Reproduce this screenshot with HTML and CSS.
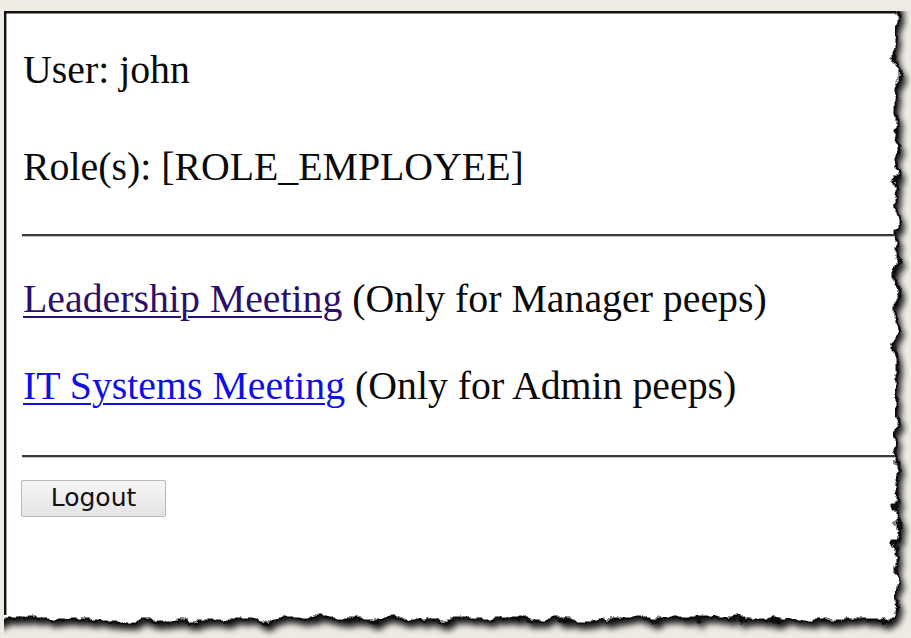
FILE: index.html
```html
<!DOCTYPE html>
<html>
<head>
<meta charset="utf-8">
<link rel="stylesheet" href="styles.css">
</head>
<body>
<div class="sheet">
  <svg class="paper" width="891" height="606" viewBox="0 0 891 606" aria-hidden="true">
    <defs>
      <filter id="torn" filterUnits="userSpaceOnUse" x="-60" y="-60" width="1020" height="740">
        <feTurbulence type="fractalNoise" baseFrequency="0.055" numOctaves="5" seed="11" result="noise"/>
        <feDisplacementMap in="SourceGraphic" in2="noise" scale="15" xChannelSelector="R" yChannelSelector="G" result="rough"/>
        <feFlood flood-color="#000" flood-opacity="0.9" result="ink"/>
        <feComposite in="ink" in2="rough" operator="in" result="shape"/>
        <feGaussianBlur in="shape" stdDeviation="3" result="blur"/>
        <feOffset in="blur" dx="3" dy="5" result="shadow"/>
        <feMerge>
          <feMergeNode in="shadow"/>
          <feMergeNode in="rough"/>
        </feMerge>
      </filter>
      <clipPath id="cut">
        <rect x="0" y="0" width="1000" height="700"/>
      </clipPath>
    </defs>
    <g clip-path="url(#cut)">
      <g filter="url(#torn)">
        <rect x="-40" y="-40" width="933" height="649" fill="#fff" stroke="#111" stroke-width="3"/>
      </g>
    </g>
    <line x1="1" y1="1.2" x2="892" y2="1.2" stroke="#111" stroke-width="2.4"/>
    <line x1="1.2" y1="0" x2="1.2" y2="604" stroke="#111" stroke-width="2.4"/>
  </svg>
  <div class="content">
    <p class="line user">User: john</p>
    <p class="line role">Role(s): [ROLE_EMPLOYEE]</p>
    <hr class="rule rule-top">
    <p class="line lead"><a class="link visited" href="#leaders">Leadership Meeting</a> (Only for Manager peeps)</p>
    <p class="line it"><a class="link" href="#systems">IT Systems Meeting</a> (Only for Admin peeps)</p>
    <hr class="rule rule-bottom">
    <form class="logout-form">
      <button type="button" class="logout">Logout</button>
    </form>
  </div>
</div>
</body>
</html>
```
FILE: styles.css
```css
html, body {
  margin: 0;
  padding: 0;
}
body {
  background: #edebe4;
  width: 911px;
  height: 638px;
  overflow: hidden;
}
.sheet {
  position: relative;
  margin: 11px 0 0 4px;
  width: 891px;
  height: 606px;
}
.paper {
  position: absolute;
  left: 0;
  top: 0;
  overflow: visible;
  z-index: 0;
}
.content {
  position: relative;
  z-index: 1;
  display: flex;
  flex-direction: column;
  align-items: flex-start;
  padding: 37px 0 0 19px;
  font-family: "Liberation Serif", "Times New Roman", serif;
  font-size: 39.8px;
  color: #0a0a0a;
}
.line {
  margin: 0;
  line-height: 45px;
  white-space: nowrap;
}
.role {
  margin-top: 52px;
}
.rule {
  align-self: stretch;
  margin: 0 0 0 -1px;
  width: 873px;
  height: 0;
  border: 0;
  border-top: 2px solid #3a3a3a;
  border-bottom: 1px solid #c4c4c4;
}
.rule-top {
  margin-top: 44px;
}
.lead {
  margin-top: 40px;
}
.it {
  margin-top: 42px;
}
.rule-bottom {
  margin-top: 46px;
}
.link {
  color: #0f10e8;
  text-decoration: underline;
  text-decoration-thickness: 2px;
  text-underline-offset: 4px;
}
.link.visited {
  color: #2a0f6c;
}
.logout-form {
  display: flex;
  margin: 22px 0 0 -2px;
}
.logout {
  width: 145px;
  height: 37px;
  padding: 0 0 2px 0;
  font-family: "DejaVu Sans", "Liberation Sans", sans-serif;
  font-size: 25px;
  line-height: 1;
  color: #111;
  background: linear-gradient(#f6f6f6, #e4e4e4);
  border: 1px solid #b8b8b8;
  border-radius: 2px;
}
```
